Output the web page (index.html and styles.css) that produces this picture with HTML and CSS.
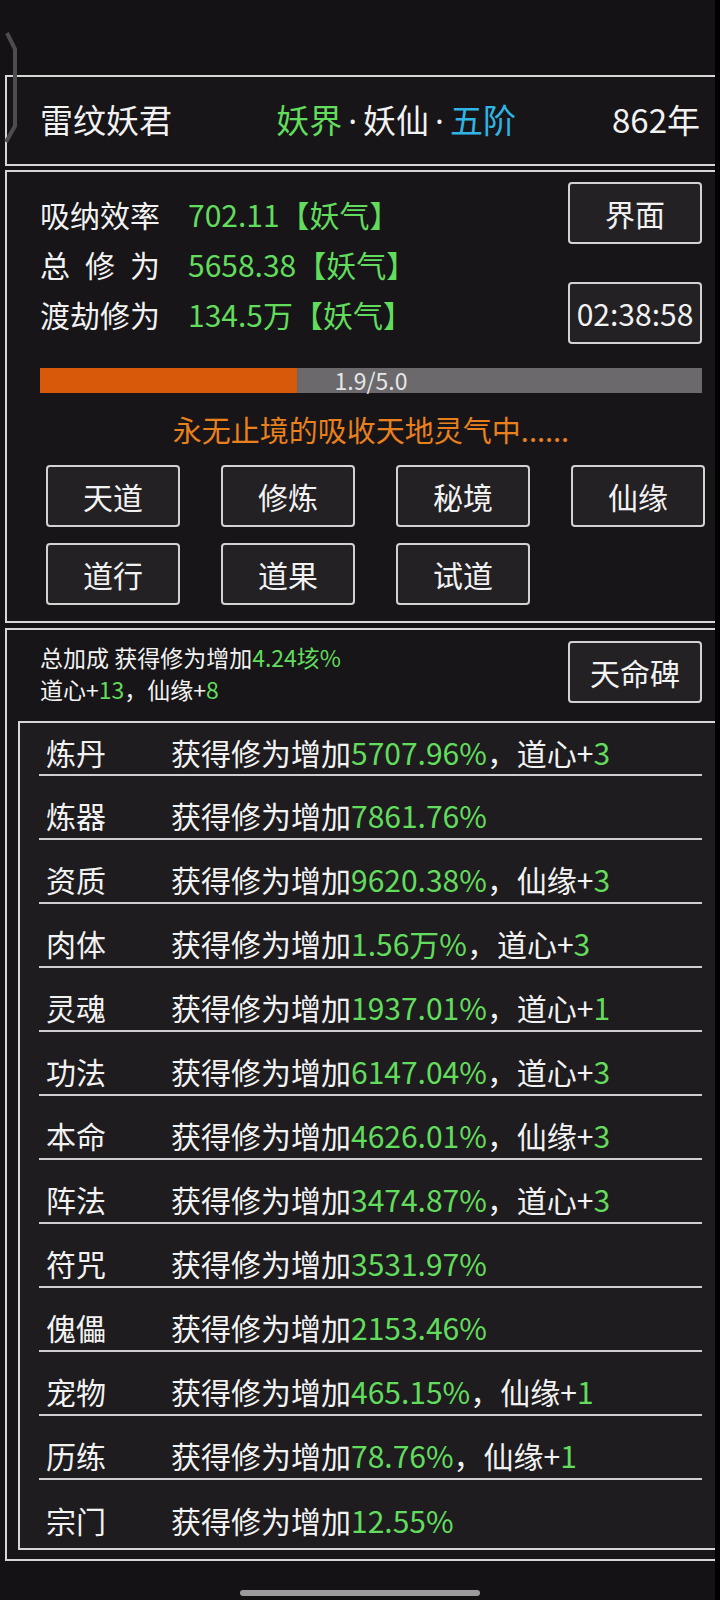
FILE: index.html
```html
<!DOCTYPE html>
<html lang="zh-CN">
<head>
  <meta charset="UTF-8" />
  <title>修为</title>
  <link rel="stylesheet" href="styles.css">
</head>
<body>
  <div class="screen">
    <svg class="corner" width="20" height="130" viewBox="0 0 20 130">
      <path d="M7 11 L15 27 L15 104 L6 120" fill="none" stroke="#4e4c4e" stroke-width="4"/>
    </svg>

    <div class="panel head">
      <span class="name">雷纹妖君</span>
      <span class="realm"><span class="green">妖界</span><span class="dot">·</span>妖仙<span class="dot">·</span><span class="cyan">五阶</span></span>
      <span class="age">862年</span>
    </div>

    <div class="panel main">
      <div class="top">
        <div class="stats">
          <p><span class="label">吸纳效率</span><span class="green">702.11【妖气】</span></p>
          <p><span class="label spread">总修为</span><span class="green">5658.38【妖气】</span></p>
          <p><span class="label">渡劫修为</span><span class="green">134.5万【妖气】</span></p>
        </div>
        <div class="side">
          <button class="btn">界面</button>
          <button class="btn time">02:38:58</button>
        </div>
      </div>

      <div class="bar">
        <div class="fill" style="width: 38.8%"></div>
        <span class="bar-text">1.9/5.0</span>
      </div>

      <p class="status">永无止境的吸收天地灵气中......</p>

      <div class="menu">
        <button class="btn">天道</button>
        <button class="btn">修炼</button>
        <button class="btn">秘境</button>
        <button class="btn">仙缘</button>
        <button class="btn">道行</button>
        <button class="btn">道果</button>
        <button class="btn">试道</button>
      </div>
    </div>

    <div class="panel bonus">
      <div class="bonus-top">
        <div class="bonus-text">
          <p>总加成 获得修为增加<span class="green">4.24垓%</span></p>
          <p>道心+<span class="green">13</span>，仙缘+<span class="green">8</span></p>
        </div>
        <button class="btn">天命碑</button>
      </div>

      <ul class="list">
        <li><span class="item">炼丹</span><span>获得修为增加<span class="green">5707.96%</span>，道心+<span class="green">3</span></span></li>
        <li><span class="item">炼器</span><span>获得修为增加<span class="green">7861.76%</span></span></li>
        <li><span class="item">资质</span><span>获得修为增加<span class="green">9620.38%</span>，仙缘+<span class="green">3</span></span></li>
        <li><span class="item">肉体</span><span>获得修为增加<span class="green">1.56万%</span>，道心+<span class="green">3</span></span></li>
        <li><span class="item">灵魂</span><span>获得修为增加<span class="green">1937.01%</span>，道心+<span class="green">1</span></span></li>
        <li><span class="item">功法</span><span>获得修为增加<span class="green">6147.04%</span>，道心+<span class="green">3</span></span></li>
        <li><span class="item">本命</span><span>获得修为增加<span class="green">4626.01%</span>，仙缘+<span class="green">3</span></span></li>
        <li><span class="item">阵法</span><span>获得修为增加<span class="green">3474.87%</span>，道心+<span class="green">3</span></span></li>
        <li><span class="item">符咒</span><span>获得修为增加<span class="green">3531.97%</span></span></li>
        <li><span class="item">傀儡</span><span>获得修为增加<span class="green">2153.46%</span></span></li>
        <li><span class="item">宠物</span><span>获得修为增加<span class="green">465.15%</span>，仙缘+<span class="green">1</span></span></li>
        <li><span class="item">历练</span><span>获得修为增加<span class="green">78.76%</span>，仙缘+<span class="green">1</span></span></li>
        <li><span class="item">宗门</span><span>获得修为增加<span class="green">12.55%</span></span></li>
      </ul>
    </div>

    <div class="home-bar"></div>
  </div>
</body>
</html>
```

FILE: styles.css
```css
body {
  margin: 0;
  background: #000;
  font-family: "Noto Sans CJK SC", "Noto Sans", sans-serif;
  color: #f2f2f2;
}

p {
  margin: 0;
}

.screen {
  position: relative;
  width: 715px;
  height: 1600px;
  overflow: hidden;
  background: #141214;
  padding-top: 75px;
  box-sizing: border-box;
}

.corner {
  position: absolute;
  left: 0;
  top: 22px;
}

.green {
  color: #62dc5c;
}

.cyan {
  color: #2fb4e4;
}

/* 面板 */
.panel {
  margin-left: 5px;
  width: 716px;
  border: 2px solid #d6d6d6;
  border-right: none;
  box-sizing: border-box;
  background: #171517;
}

.head {
  height: 91px;
  display: flex;
  align-items: center;
  justify-content: space-between;
  padding: 0 21px 4px 33px;
  font-size: 33px;
}

.realm {
  margin-left: 8px;
}

.dot {
  font-family: "Noto Sans", sans-serif;
  margin: 0 6px;
}

.main {
  margin-top: 4px;
  height: 453px;
  padding: 10px 19px 0 33px;
}

.top {
  display: flex;
  justify-content: space-between;
}

.stats {
  padding-top: 7px;
  font-size: 30px;
}

.stats p {
  height: 50px;
  line-height: 50px;
}

.label {
  display: inline-block;
  width: 148px;
}

.label.spread {
  letter-spacing: 15px;
}

.side {
  display: flex;
  flex-direction: column;
  gap: 38px;
}

.btn {
  width: 134px;
  height: 62px;
  border: 2px solid #d2d2d2;
  border-radius: 4px;
  background: #232123;
  color: #f2f2f2;
  font-family: inherit;
  font-size: 30px;
  padding: 0;
}

.bar {
  position: relative;
  margin-top: 24px;
  height: 25px;
  background: #6b696c;
}

.fill {
  height: 100%;
  background: #d9590a;
}

.bar-text {
  position: absolute;
  left: 0;
  right: 0;
  top: 0;
  text-align: center;
  font-size: 23px;
  line-height: 25px;
  color: #e6e6e6;
}

.status {
  margin-top: 16px;
  text-align: center;
  color: #e8801e;
  font-size: 29px;
  line-height: 40px;
}

.menu {
  margin-top: 16px;
  padding-left: 6px;
  display: grid;
  grid-template-columns: repeat(4, 134px);
  column-gap: 41px;
  row-gap: 16px;
}

.bonus {
  margin-top: 5px;
  height: 933px;
  padding: 11px 19px 0 33px;
}

.bonus-top {
  display: flex;
  justify-content: space-between;
  align-items: flex-start;
}

.bonus-text {
  padding-top: 0;
  font-size: 23px;
  line-height: 32px;
}

.list {
  list-style: none;
  margin: 16px 0 0 -22px;
  padding: 0 0 0 19px;
  width: 718px;
  height: 829px;
  overflow: hidden;
  box-sizing: border-box;
  border: 2px solid #d6d6d6;
  border-right: none;
  background: #1e1c1e;
  font-size: 30px;
}

.list li {
  height: 64px;
  width: 663px;
  padding-top: 16px;
  display: flex;
  align-items: center;
  border-bottom: 2px solid #cfcfcf;
  box-sizing: border-box;
}

.list li:first-child {
  height: 53px;
  padding-top: 7px;
}

.list li:last-child {
  border-bottom: none;
}

.item {
  width: 125px;
  padding-left: 7px;
}

.home-bar {
  position: absolute;
  left: 240px;
  top: 1590px;
  width: 240px;
  height: 6px;
  border-radius: 3px;
  background: #9c9c9c;
}
```
